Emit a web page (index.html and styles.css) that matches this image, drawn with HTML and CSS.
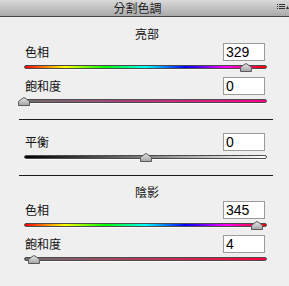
FILE: index.html
```html
<!DOCTYPE html>
<html lang="zh-Hant">
  <head>
    <meta charset="UTF-8" />
    <meta name="viewport" content="width=device-width, initial-scale=1.0" />
    <title>分割色調</title>
    <link rel="stylesheet" href="styles.css">
  </head>

  <body>
    <svg width="0" height="0" class="defs">
      <defs>
        <linearGradient id="thumb-fill" x1="0" y1="0" x2="0" y2="1">
          <stop offset="0" stop-color="#e6e6e6" />
          <stop offset="1" stop-color="#a2a2a2" />
        </linearGradient>
        <symbol id="thumb" viewBox="0 0 12 9">
          <path d="M0.5 8.5 V5 Q0.5 4.3 1.2 3.8 L5 1 Q6 0.3 7 1 L10.8 3.8 Q11.5 4.3 11.5 5 V8.5 Z" fill="url(#thumb-fill)" stroke="#5a5a5a" stroke-width="1" />
        </symbol>
      </defs>
    </svg>

    <div class="panel">
      <div class="panel-header">
        <span class="panel-title">分割色調</span>
        <svg class="panel-menu" width="14" height="12" viewBox="0 0 14 12">
          <rect x="2" y="4" width="1" height="1" fill="#333" />
          <rect x="4" y="4" width="6" height="1" fill="#333" />
          <rect x="2" y="6" width="1" height="1" fill="#333" />
          <rect x="4" y="6" width="6" height="1" fill="#333" />
          <rect x="2" y="8" width="1" height="1" fill="#333" />
          <rect x="4" y="8" width="6" height="1" fill="#333" />
          <path d="M11 9 L12.5 6 L14 9 Z" fill="#333" />
        </svg>
      </div>

      <div class="panel-body">
        <div class="group group-first">
          <div class="group-title">亮部</div>
          <div class="field">
            <div class="field-row">
              <span class="field-label">色相</span>
              <input class="field-input" type="text" value="329" />
            </div>
            <div class="slider">
              <div class="track track-hue"></div>
              <svg class="thumb" style="left: 91.4%"><use href="#thumb" /></svg>
            </div>
          </div>
          <div class="field">
            <div class="field-row">
              <span class="field-label">飽和度</span>
              <input class="field-input" type="text" value="0" />
            </div>
            <div class="slider">
              <div class="track track-sat-high"></div>
              <svg class="thumb" style="left: 0%"><use href="#thumb" /></svg>
            </div>
          </div>
        </div>

        <div class="divider"></div>

        <div class="group group-plain">
          <div class="field">
            <div class="field-row">
              <span class="field-label">平衡</span>
              <input class="field-input" type="text" value="0" />
            </div>
            <div class="slider">
              <div class="track track-balance"></div>
              <svg class="thumb" style="left: 50%"><use href="#thumb" /></svg>
            </div>
          </div>
        </div>

        <div class="divider"></div>

        <div class="group">
          <div class="group-title">陰影</div>
          <div class="field">
            <div class="field-row">
              <span class="field-label">色相</span>
              <input class="field-input" type="text" value="345" />
            </div>
            <div class="slider">
              <div class="track track-hue"></div>
              <svg class="thumb" style="left: 95.8%"><use href="#thumb" /></svg>
            </div>
          </div>
          <div class="field">
            <div class="field-row">
              <span class="field-label">飽和度</span>
              <input class="field-input" type="text" value="4" />
            </div>
            <div class="slider">
              <div class="track track-sat-low"></div>
              <svg class="thumb" style="left: 4%"><use href="#thumb" /></svg>
            </div>
          </div>
        </div>
      </div>
    </div>
  </body>
</html>
```

FILE: styles.css
```css
body {
  margin: 0;
  background: #efefef;
  font-family: "Noto Sans CJK TC", "Noto Sans", sans-serif;
  color: #111;
}

.defs {
  position: absolute;
}

.panel {
  width: 289px;
  height: 286px;
  overflow: hidden;
  background: #efefef;
}

.panel-header {
  display: flex;
  height: 16px;
  border-bottom: 1px solid #474747;
  background: linear-gradient(to bottom, #dadada, #a9a9a9);
}

.panel-title {
  flex: 1;
  text-align: center;
  font-size: 12px;
  line-height: 16px;
  color: #1e1e1e;
}

.panel-menu {
  display: block;
}

.panel-body {
  padding: 0 16px 0 19px;
}

.group {
  padding: 8px 0 12px;
}

.group-first {
  padding-top: 9px;
}

.group-plain {
  padding-top: 13px;
}

.group-title {
  text-align: center;
  font-size: 12px;
  line-height: 16px;
  padding-left: 2px;
}

.group-title + .field {
  margin-top: 1px;
}

.field + .field {
  margin-top: 4px;
}

.field-row {
  display: flex;
  align-items: center;
  justify-content: space-between;
  height: 18px;
  padding: 0 8px 0 6px;
}

.field-label {
  font-size: 12px;
  line-height: 14px;
}

.field-input {
  box-sizing: border-box;
  width: 42px;
  height: 18px;
  margin: 0;
  padding: 0 2px;
  border: 1px solid #9b9b9b;
  background: #fff;
  font-family: "Liberation Sans", Arial, sans-serif;
  font-size: 14px;
  color: #000;
  outline: none;
}

.divider {
  height: 1px;
  background: #1c1c1c;
}

.slider {
  position: relative;
  height: 12px;
  margin: 0 6px 0 5px;
}

.track {
  box-sizing: border-box;
  position: relative;
  top: 4px;
  height: 4px;
  border: 1px solid #4c4c4c;
  border-radius: 2px;
  box-shadow: 0 1px 0 #fafafa;
}

.track-hue {
  background: linear-gradient(to right, #f00, #ff0 16.6%, #0f0 33.3%, #0ff 50%, #00f 66.6%, #f0f 83.3%, #f00);
}

.track-sat-high {
  background: linear-gradient(to right, #6e6e6e, #ff008c);
}

.track-sat-low {
  background: linear-gradient(to right, #6e6e6e, #ff0040);
}

.track-balance {
  background: linear-gradient(to right, #000, #808080 50%, #fff);
}

.thumb {
  position: absolute;
  top: 2px;
  width: 12px;
  height: 9px;
  margin-left: -6px;
}
```
